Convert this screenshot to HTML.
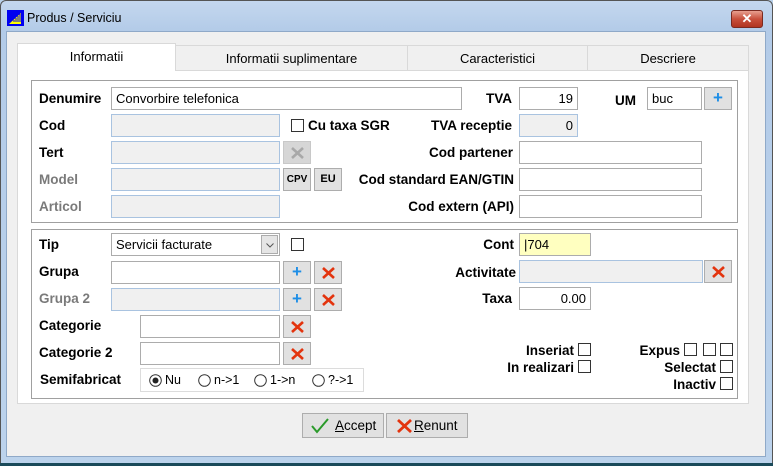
<!DOCTYPE html>
<html><head><meta charset="utf-8"><style>
*{box-sizing:border-box;margin:0;padding:0}
body{width:773px;height:466px;overflow:hidden;background:#b9d1ea;font-family:"Liberation Sans",Arial,sans-serif;font-size:13px;color:#000;position:relative}
div,span,svg{position:absolute}
.frame{left:0;top:0;width:773px;height:466px;background:linear-gradient(#c4d7ee,#b3cbe8 30px,#bcd3ec);border:1px solid #555;border-radius:6px 6px 0 0}
.client{left:6px;top:31px;width:760px;height:426px;background:#f0f0f0;border:1px solid #8fa9c8}
.l{font-weight:bold;font-size:13.5px;white-space:nowrap}
.g{color:#7a7a7a}
.r{text-align:right}
.in{background:#fff;border:1px solid #acacac;height:23px;padding:3px 4px;font-size:13px;white-space:nowrap}
.dis{background:#f0f0f0;border:1px solid #a9c3e0}
.btn{background:#e1e1e1;border:1px solid #adadad;height:23px;text-align:center}
.cb{width:13px;height:13px;border:1px solid #333;background:#fff}
.p{color:#1e8ee6;font-weight:bold;font-size:17px;line-height:20px;left:0;right:0;top:0}
.xs{left:7px;top:5px}
.tab{top:45px;height:26px;border:1px solid #d9d9d9;background:#f0f0f0;text-align:center;line-height:26px;font-size:13px}
.grp{left:31px;width:707px;border:1px solid #a0a0a0}
</style></head><body>
<div class="frame"></div>
<svg style="left:7px;top:10px" width="17" height="16"><rect width="17" height="16" fill="#0000f0"/><path d="M2 14 L14 3 L14 14 Z" fill="#ffff00"/><path d="M6 11h9M8 9h7M10 7h5M12 5h3" stroke="#0000f0" stroke-width="1"/></svg>
<span style="left:27px;top:11px;font-size:12.5px;color:#000">Produs / Serviciu</span>
<div style="left:731px;top:10px;width:32px;height:18px;border:1px solid #7a2a20;border-radius:3px;background:linear-gradient(#e8a090,#c8503c 50%,#b03420);color:#fff;font-weight:bold;text-align:center;line-height:16px;font-size:13px">✕</div>
<div class="client"></div>
<div style="left:17px;top:70px;width:732px;height:334px;background:#fff;border:1px solid #d9d9d9"></div>
<div class="tab" style="left:175px;width:233px">Informatii suplimentare</div>
<div class="tab" style="left:407px;width:181px">Caracteristici</div>
<div class="tab" style="left:587px;width:162px">Descriere</div>
<div class="tab" style="left:17px;top:43px;width:159px;height:28px;background:#fff;border-bottom:none;line-height:26px">Informatii</div>

<div class="grp" style="top:80px;height:143px"></div>
<div class="grp" style="top:229px;height:170px"></div>

<span class="l" style="left:39px;top:91px">Denumire</span>
<div class="in" style="left:111px;top:87px;width:351px">Convorbire telefonica</div>
<span class="l" style="left:39px;top:118px">Cod</span>
<div class="in dis" style="left:111px;top:114px;width:169px"></div>
<div class="cb" style="left:291px;top:119px"></div>
<span class="l" style="left:308px;top:118px">Cu taxa SGR</span>
<span class="l" style="left:39px;top:145px">Tert</span>
<div class="in dis" style="left:111px;top:141px;width:169px"></div>
<div class="btn" style="left:283px;top:141px;width:28px;background:#d6d6d6;border-color:#c8c8c8"><svg class="xs" width="13" height="12"><path d="M1 1L12 11M12 1L1 11" stroke="#a8a8a8" stroke-width="2.6"/></svg></div>
<span class="l g" style="left:39px;top:172px">Model</span>
<div class="in dis" style="left:111px;top:168px;width:169px"></div>
<div class="btn" style="left:283px;top:168px;width:28px;font-size:10px;font-weight:bold;line-height:21px">CPV</div>
<div class="btn" style="left:314px;top:168px;width:28px;font-size:11px;font-weight:bold;line-height:21px">EU</div>
<span class="l g" style="left:39px;top:199px">Articol</span>
<div class="in dis" style="left:111px;top:195px;width:169px"></div>

<span class="l r" style="left:380px;width:132px;top:91px">TVA</span>
<div class="in r" style="left:519px;top:87px;width:59px">19</div>
<span class="l" style="left:615px;top:93px">UM</span>
<div class="in" style="left:647px;top:87px;width:55px">buc</div>
<div class="btn" style="left:704px;top:87px;width:28px"><span class="p">+</span></div>
<span class="l r" style="left:360px;width:152px;top:118px">TVA receptie</span>
<div class="in dis r" style="left:519px;top:114px;width:59px">0</div>
<span class="l r" style="left:360px;width:153px;top:145px">Cod partener</span>
<div class="in" style="left:519px;top:141px;width:183px"></div>
<span class="l r" style="left:340px;width:174px;top:172px">Cod standard EAN/GTIN</span>
<div class="in" style="left:519px;top:168px;width:183px"></div>
<span class="l r" style="left:340px;width:174px;top:199px">Cod extern (API)</span>
<div class="in" style="left:519px;top:195px;width:183px"></div>

<span class="l" style="left:39px;top:237px">Tip</span>
<div class="in" style="left:111px;top:233px;width:169px">Servicii facturate</div>
<div style="left:261px;top:235px;width:17px;height:19px;background:#e5e5e5;border:1px solid #acacac"><svg style="left:4px;top:7px" width="8" height="5"><path d="M0.5 0.5L4 4L7.5 0.5" fill="none" stroke="#555"/></svg></div>
<div class="cb" style="left:291px;top:238px"></div>
<span class="l" style="left:39px;top:264px">Grupa</span>
<div class="in" style="left:111px;top:261px;width:169px"></div>
<div class="btn" style="left:283px;top:261px;width:28px"><span class="p">+</span></div>
<div class="btn" style="left:314px;top:261px;width:28px"><svg class="xs" width="13" height="12"><path d="M1 1L12 11M12 1L1 11" stroke="#e3340e" stroke-width="2.6"/></svg></div>
<span class="l g" style="left:39px;top:291px">Grupa 2</span>
<div class="in dis" style="left:111px;top:288px;width:169px"></div>
<div class="btn" style="left:283px;top:288px;width:28px"><span class="p">+</span></div>
<div class="btn" style="left:314px;top:288px;width:28px"><svg class="xs" width="13" height="12"><path d="M1 1L12 11M12 1L1 11" stroke="#e3340e" stroke-width="2.6"/></svg></div>
<span class="l" style="left:39px;top:318px">Categorie</span>
<div class="in" style="left:140px;top:315px;width:140px"></div>
<div class="btn" style="left:283px;top:315px;width:28px"><svg class="xs" width="13" height="12"><path d="M1 1L12 11M12 1L1 11" stroke="#e3340e" stroke-width="2.6"/></svg></div>
<span class="l" style="left:39px;top:345px">Categorie 2</span>
<div class="in" style="left:140px;top:342px;width:140px"></div>
<div class="btn" style="left:283px;top:342px;width:28px"><svg class="xs" width="13" height="12"><path d="M1 1L12 11M12 1L1 11" stroke="#e3340e" stroke-width="2.6"/></svg></div>
<span class="l" style="left:40px;top:372px">Semifabricat</span>
<div style="left:140px;top:368px;width:224px;height:24px;border:1px solid #dcdcdc;background:#fff;font-size:12.5px">
<svg style="left:8px;top:5px" width="13" height="13"><circle cx="6.5" cy="6.5" r="5.8" fill="#fff" stroke="#333"/><circle cx="6.5" cy="6.5" r="3" fill="#222"/></svg><span style="left:24px;top:4px">Nu</span>
<svg style="left:57px;top:5px" width="13" height="13"><circle cx="6.5" cy="6.5" r="5.8" fill="#fff" stroke="#333"/></svg><span style="left:73px;top:4px">n-&gt;1</span>
<svg style="left:113px;top:5px" width="13" height="13"><circle cx="6.5" cy="6.5" r="5.8" fill="#fff" stroke="#333"/></svg><span style="left:129px;top:4px">1-&gt;n</span>
<svg style="left:171px;top:5px" width="13" height="13"><circle cx="6.5" cy="6.5" r="5.8" fill="#fff" stroke="#333"/></svg><span style="left:187px;top:4px">?-&gt;1</span>
</div>

<span class="l r" style="left:400px;width:114px;top:237px">Cont</span>
<div class="in" style="left:519px;top:233px;width:72px;background:#ffffc0">|704</div>
<span class="l r" style="left:400px;width:116px;top:265px">Activitate</span>
<div class="in dis" style="left:519px;top:260px;width:184px"></div>
<div class="btn" style="left:704px;top:260px;width:28px"><svg class="xs" width="13" height="12"><path d="M1 1L12 11M12 1L1 11" stroke="#e3340e" stroke-width="2.6"/></svg></div>
<span class="l r" style="left:400px;width:112px;top:291px">Taxa</span>
<div class="in r" style="left:519px;top:287px;width:72px">0.00</div>

<span class="l r" style="left:460px;width:114px;top:343px">Inseriat</span>
<div class="cb" style="left:578px;top:343px"></div>
<span class="l r" style="left:460px;width:114px;top:360px">In realizari</span>
<div class="cb" style="left:578px;top:360px"></div>
<span class="l r" style="left:600px;width:80px;top:343px">Expus</span>
<div class="cb" style="left:684px;top:343px"></div>
<div class="cb" style="left:703px;top:343px"></div>
<div class="cb" style="left:720px;top:343px"></div>
<span class="l r" style="left:600px;width:116px;top:360px">Selectat</span>
<div class="cb" style="left:720px;top:360px"></div>
<span class="l r" style="left:600px;width:116px;top:377px">Inactiv</span>
<div class="cb" style="left:720px;top:377px"></div>

<div class="btn" style="left:302px;top:413px;width:82px;height:25px;font-size:13.5px;line-height:23px;text-align:left"><svg style="left:8px;top:4px" width="18" height="16"><path d="M1 8L6 14L17 1" fill="none" stroke="#2a9a2a" stroke-width="2"/></svg><span style="left:32px;top:0"><u>A</u>ccept</span></div>
<div class="btn" style="left:386px;top:413px;width:82px;height:25px;font-size:13.5px;line-height:23px;text-align:left"><svg style="left:10px;top:5px" width="15" height="14"><path d="M1 1L14 13M14 1L1 13" stroke="#e3340e" stroke-width="2.8"/></svg><span style="left:27px;top:0"><u>R</u>enunt</span></div>
<div style="left:0;top:463px;width:773px;height:3px;background:#1a4a5a"></div>
</body></html>
